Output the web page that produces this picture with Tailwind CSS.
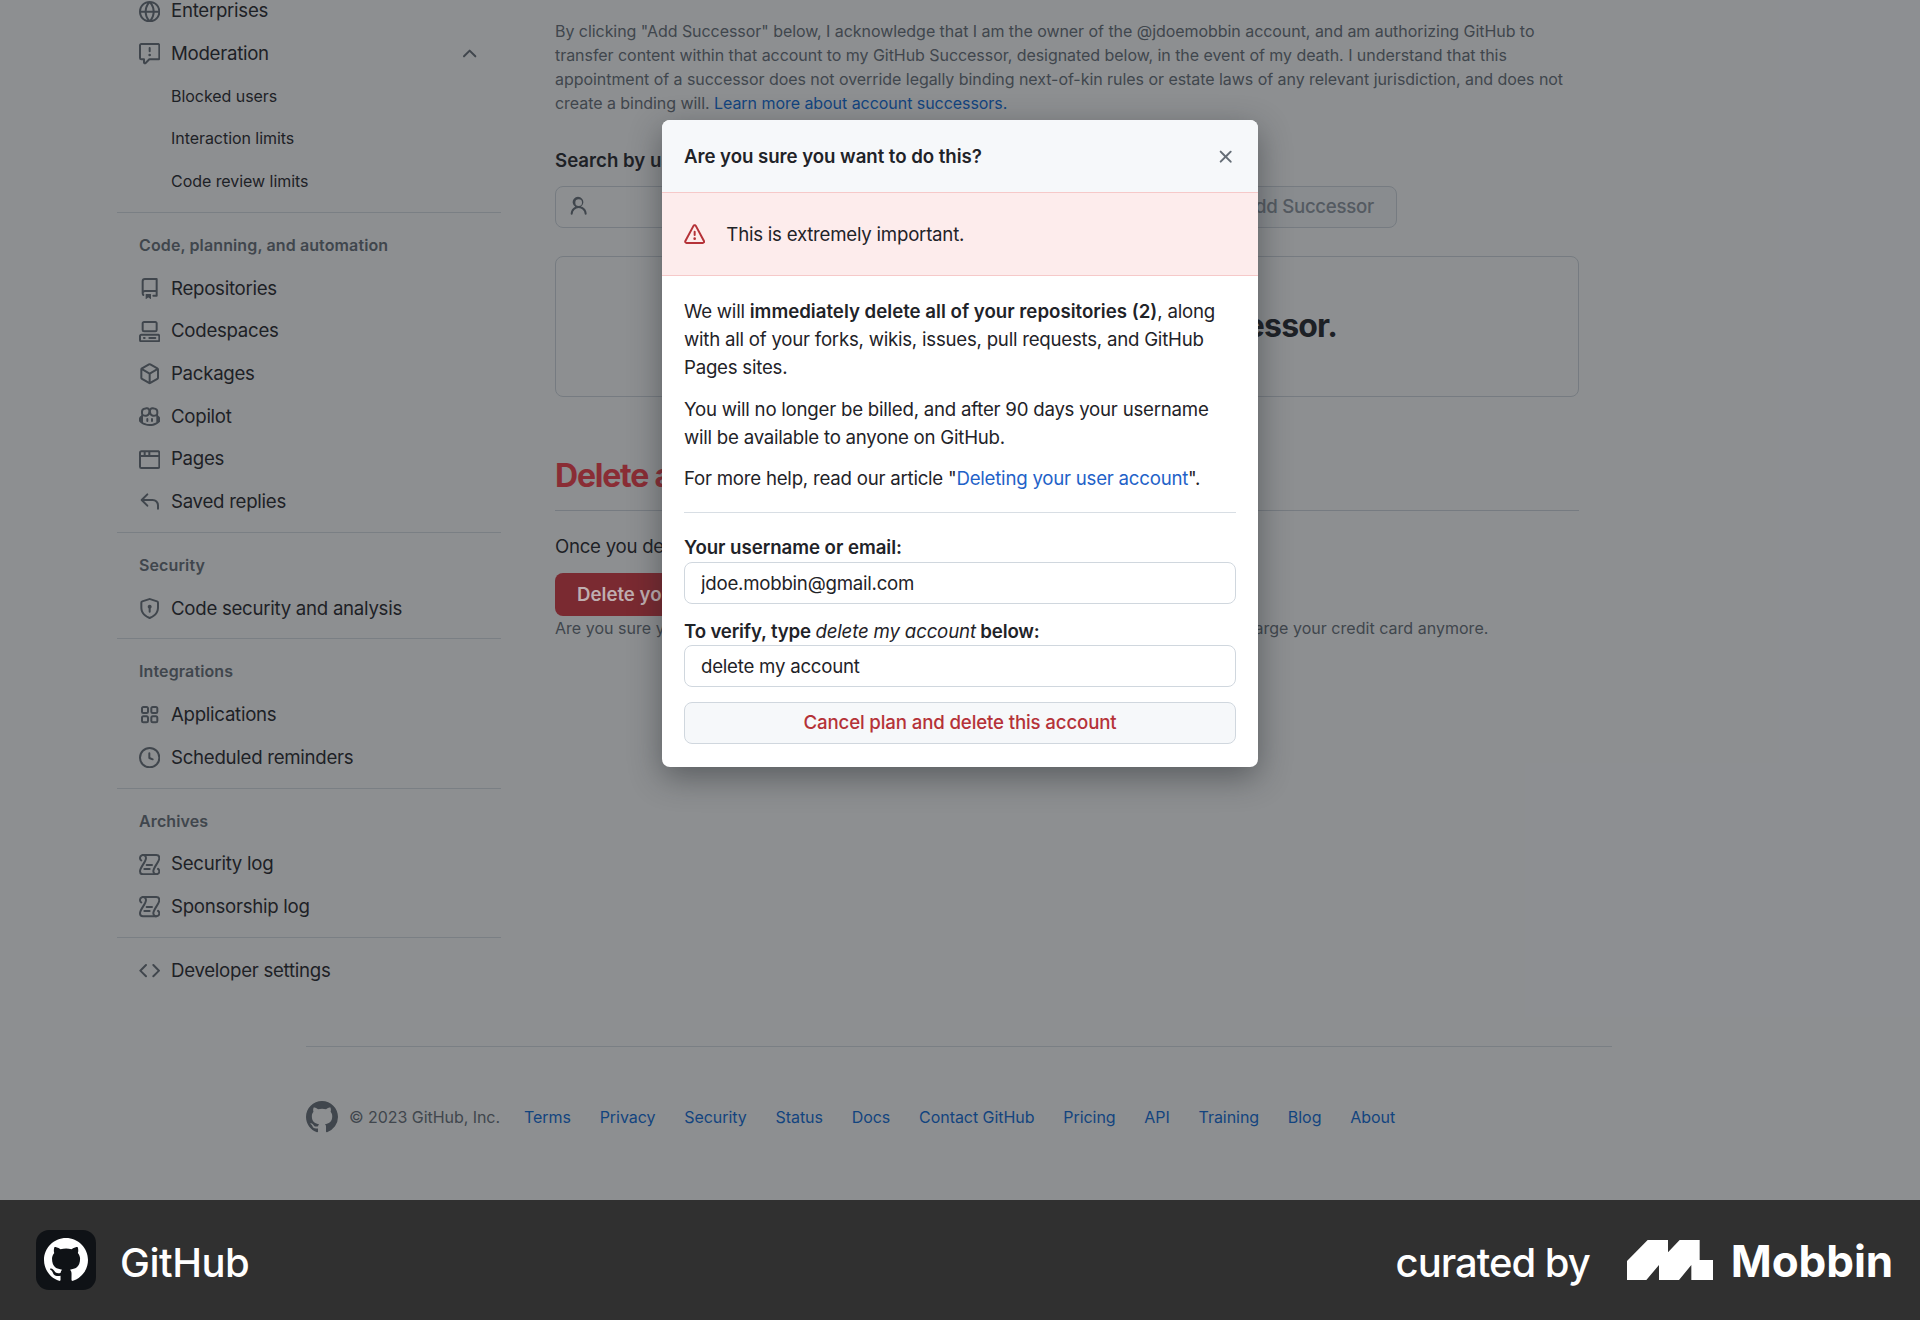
<!DOCTYPE html>
<html lang="en">
<head>
  <meta charset="UTF-8" />
  <title>Delete account</title>
  <script src="https://cdn.jsdelivr.net/npm/@tailwindcss/browser@4"></script>
</head>
<body class="bg-white font-[family-name:Inter,sans-serif] text-[#1f2328]">
  <div class="w-[1920px] h-[1320px] overflow-hidden flex flex-col">
    <div class="relative h-[1200px] overflow-hidden bg-white">
      <div class="flex h-[1046px] pl-[117px] gap-[54px]">
        <!-- sidebar -->
        <nav class="w-[384px] shrink-0 -mt-[10px] text-[18.67px] tracking-[-0.28px]">
          <div class="h-[42.67px] flex items-center pl-[22px] gap-[10.67px]">
            <svg class="w-[21.33px] h-[21.33px] fill-[#656d76]" viewBox="0 0 16 16"><path d="M8 0a8 8 0 1 1 0 16A8 8 0 0 1 8 0ZM5.78 8.75a9.64 9.64 0 0 0 1.363 4.177c.255.426.542.832.857 1.215.245-.296.551-.705.857-1.215A9.64 9.64 0 0 0 10.22 8.75Zm4.44-1.5a9.64 9.64 0 0 0-1.363-4.177c-.307-.51-.612-.919-.857-1.215a9.927 9.927 0 0 0-.857 1.215A9.64 9.64 0 0 0 5.78 7.25Zm-5.944 1.5H1.543a6.507 6.507 0 0 0 4.666 5.5c-.123-.181-.24-.365-.352-.552-.715-1.192-1.437-2.874-1.581-4.948Zm-2.733-1.5h2.733c.144-2.074.866-3.756 1.58-4.948.12-.197.237-.381.353-.552a6.507 6.507 0 0 0-4.666 5.5Zm10.181 1.5c-.144 2.074-.866 3.756-1.58 4.948-.12.197-.237.381-.353.552a6.507 6.507 0 0 0 4.666-5.5Zm2.733-1.5a6.507 6.507 0 0 0-4.666-5.5c.123.181.24.365.353.552.714 1.192 1.436 2.874 1.58 4.948Z"/></svg>
            <span>Enterprises</span>
          </div>
          <div class="h-[42.67px] flex items-center pl-[22px] gap-[10.67px]">
            <svg class="w-[21.33px] h-[21.33px] fill-[#656d76]" viewBox="0 0 16 16"><path d="M0 1.75C0 .784.784 0 1.75 0h12.5C15.216 0 16 .784 16 1.75v9.5A1.75 1.75 0 0 1 14.25 13H8.06l-2.573 2.573A1.458 1.458 0 0 1 3 14.543V13H1.75A1.75 1.75 0 0 1 0 11.25Zm1.75-.25a.25.25 0 0 0-.25.25v9.5c0 .138.112.25.25.25h2a.75.75 0 0 1 .75.75v2.19l2.72-2.72a.749.749 0 0 1 .53-.22h6.5a.25.25 0 0 0 .25-.25v-9.5a.25.25 0 0 0-.25-.25Zm7 2.25v2.5a.75.75 0 0 1-1.5 0v-2.5a.75.75 0 0 1 1.5 0ZM9 9a1 1 0 1 1-2 0 1 1 0 0 1 2 0Z"/></svg>
            <span>Moderation</span>
            <svg class="ml-auto mr-[21px] w-[21.33px] h-[21.33px] fill-[#656d76]" viewBox="0 0 16 16"><path d="M3.22 10.53a.749.749 0 0 1 0-1.06l4.25-4.25a.749.749 0 0 1 1.06 0l4.25 4.25a.749.749 0 0 1-1.06 1.06L8 6.811 4.28 10.53a.749.749 0 0 1-1.06 0Z"/></svg>
          </div>
          <div class="h-[42.67px] pb-[2px] flex items-center pl-[54px] text-[16px] tracking-[-0.05px]">Blocked users</div>
          <div class="h-[42.67px] pb-[2px] flex items-center pl-[54px] text-[16px] tracking-[-0.05px]">Interaction limits</div>
          <div class="h-[42.67px] pb-[2px] flex items-center pl-[54px] text-[16px] tracking-[-0.05px]">Code review limits</div>
          <div class="mt-[8.65px] border-t border-[#d8dee4]"></div>

          <div class="h-[54.33px] pt-[22px] pl-[22px] text-[16px] leading-[21.33px] font-semibold text-[#656d76] tracking-[0.12px]">Code, planning, and automation</div>
          <div class="h-[42.67px] flex items-center pl-[22px] gap-[10.67px]">
            <svg class="w-[21.33px] h-[21.33px] fill-[#656d76]" viewBox="0 0 16 16"><path d="M2 2.5A2.5 2.5 0 0 1 4.5 0h8.75a.75.75 0 0 1 .75.75v12.5a.75.75 0 0 1-.75.75h-2.5a.75.75 0 0 1 0-1.5h1.75v-2h-8a1 1 0 0 0-.714 1.7.75.75 0 1 1-1.072 1.05A2.495 2.495 0 0 1 2 11.5Zm10.5-1h-8a1 1 0 0 0-1 1v6.708A2.486 2.486 0 0 1 4.5 9h8ZM5 12.25a.25.25 0 0 1 .25-.25h3.5a.25.25 0 0 1 .25.25v3.25a.25.25 0 0 1-.4.2l-1.45-1.087a.249.249 0 0 0-.3 0L5.4 15.7a.25.25 0 0 1-.4-.2Z"/></svg>
            <span>Repositories</span>
          </div>
          <div class="h-[42.67px] flex items-center pl-[22px] gap-[10.67px]">
            <svg class="w-[21.33px] h-[21.33px] fill-[#656d76]" viewBox="0 0 16 16"><path d="M0 11.25c0-.966.784-1.75 1.75-1.75h12.5c.966 0 1.75.784 1.75 1.75v3A1.75 1.75 0 0 1 14.25 16H1.75A1.75 1.75 0 0 1 0 14.25Zm2-9.5C2 .784 2.784 0 3.75 0h8.5C13.216 0 14 .784 14 1.75v5a1.75 1.75 0 0 1-1.75 1.75h-8.5A1.75 1.75 0 0 1 2 6.75Zm1.75-.25a.25.25 0 0 0-.25.25v5c0 .138.112.25.25.25h8.5a.25.25 0 0 0 .25-.25v-5a.25.25 0 0 0-.25-.25Zm-2 9.5a.25.25 0 0 0-.25.25v3c0 .138.112.25.25.25h12.5a.25.25 0 0 0 .25-.25v-3a.25.25 0 0 0-.25-.25Z"/><path d="M7 12.75a.75.75 0 0 1 .75-.75h4.5a.75.75 0 0 1 0 1.5h-4.5a.75.75 0 0 1-.75-.75Zm-4 0c0-.414.336-.75.75-.75h.5a.75.75 0 0 1 0 1.5h-.5a.75.75 0 0 1-.75-.75Z"/></svg>
            <span>Codespaces</span>
          </div>
          <div class="h-[42.67px] flex items-center pl-[22px] gap-[10.67px]">
            <svg class="w-[21.33px] h-[21.33px] fill-[#656d76]" viewBox="0 0 16 16"><path d="m8.878.392 5.25 3.045c.54.314.872.89.872 1.514v6.098a1.75 1.75 0 0 1-.872 1.514l-5.25 3.045a1.75 1.75 0 0 1-1.756 0l-5.25-3.045A1.75 1.75 0 0 1 1 11.049V4.951c0-.624.332-1.201.872-1.514L7.122.392a1.75 1.75 0 0 1 1.756 0ZM7.875 1.69l-4.63 2.685L8 7.133l4.755-2.758-4.63-2.685a.248.248 0 0 0-.25 0ZM2.5 5.677v5.372c0 .09.047.171.125.216l4.625 2.683V8.432Zm6.25 8.271 4.625-2.683a.25.25 0 0 0 .125-.216V5.677L8.75 8.432Z"/></svg>
            <span>Packages</span>
          </div>
          <div class="h-[42.67px] flex items-center pl-[22px] gap-[10.67px]">
            <svg class="w-[21.33px] h-[21.33px] fill-[#656d76]" viewBox="0 0 16 16"><path d="M7.998 15.035c-4.562 0-7.873-2.914-7.998-3.749V9.338c.085-.628.677-1.686 1.588-2.065.013-.07.024-.143.036-.218.029-.183.06-.384.126-.612-.201-.508-.254-1.084-.254-1.656 0-.87.128-1.769.693-2.484.579-.733 1.494-1.124 2.724-1.261 1.206-.134 2.262.034 2.944.765.05.053.096.108.139.165.044-.057.094-.112.143-.165.682-.731 1.738-.899 2.944-.765 1.23.137 2.145.528 2.724 1.261.566.715.693 1.614.693 2.484 0 .572-.053 1.148-.254 1.656.066.228.098.429.126.612.012.076.024.148.037.218.924.385 1.522 1.471 1.591 2.095v1.872c0 .766-3.351 3.795-8.002 3.795Zm0-1.485c2.28 0 4.584-1.11 5.002-1.433V7.862l-.023-.116c-.49.21-1.075.291-1.727.291-1.146 0-2.059-.327-2.71-.991A3.222 3.222 0 0 1 8 6.303a3.24 3.24 0 0 1-.544.743c-.65.664-1.563.991-2.71.991-.652 0-1.236-.081-1.727-.291l-.023.116v4.255c.419.323 2.722 1.433 5.002 1.433ZM6.762 2.83c-.193-.206-.637-.413-1.682-.297-1.019.113-1.479.404-1.713.7-.247.312-.369.789-.369 1.554 0 .793.129 1.171.308 1.371.162.181.519.379 1.442.379.853 0 1.339-.235 1.638-.54.315-.322.527-.827.617-1.553.117-.935-.037-1.395-.241-1.614Zm4.155-.297c-1.044-.116-1.488.091-1.681.297-.204.219-.359.679-.242 1.614.091.726.303 1.231.618 1.553.299.305.784.54 1.638.54.922 0 1.28-.198 1.442-.379.179-.2.308-.578.308-1.371 0-.765-.123-1.242-.37-1.554-.233-.296-.693-.587-1.713-.7Z"/><path d="M6.25 9.037a.75.75 0 0 1 .75.75v1.501a.75.75 0 0 1-1.5 0V9.787a.75.75 0 0 1 .75-.75Zm4.25.75v1.501a.75.75 0 0 1-1.5 0V9.787a.75.75 0 0 1 1.5 0Z"/></svg>
            <span>Copilot</span>
          </div>
          <div class="h-[42.67px] flex items-center pl-[22px] gap-[10.67px]">
            <svg class="w-[21.33px] h-[21.33px] fill-[#656d76]" viewBox="0 0 16 16"><path d="M0 2.75C0 1.784.784 1 1.75 1h12.5c.966 0 1.75.784 1.75 1.75v10.5A1.75 1.75 0 0 1 14.25 15H1.75A1.75 1.75 0 0 1 0 13.25ZM14.5 6h-13v7.25c0 .138.112.25.25.25h12.5a.25.25 0 0 0 .25-.25Zm-6-3.5v2h6V2.75a.25.25 0 0 0-.25-.25ZM5 2.5v2h2v-2Zm-3.25 0a.25.25 0 0 0-.25.25V4.5h2v-2Z"/></svg>
            <span>Pages</span>
          </div>
          <div class="h-[42.67px] flex items-center pl-[22px] gap-[10.67px]">
            <svg class="w-[21.33px] h-[21.33px] fill-[#656d76]" viewBox="0 0 16 16"><path d="M6.78 1.97a.75.75 0 0 1 0 1.06L3.81 6h6.44A4.75 4.75 0 0 1 15 10.75v2.5a.75.75 0 0 1-1.5 0v-2.5a3.25 3.25 0 0 0-3.25-3.25H3.81l2.97 2.97a.749.749 0 0 1-.326 1.275.749.749 0 0 1-.734-.215L1.47 7.28a.75.75 0 0 1 0-1.06l4.25-4.25a.75.75 0 0 1 1.06 0Z"/></svg>
            <span>Saved replies</span>
          </div>
          <div class="mt-[8.67px] border-t border-[#d8dee4]"></div>

          <div class="h-[54.33px] pt-[22px] pl-[22px] text-[16px] leading-[21.33px] font-semibold text-[#656d76] tracking-[0.12px]">Security</div>
          <div class="h-[42.67px] flex items-center pl-[22px] gap-[10.67px]">
            <svg class="w-[21.33px] h-[21.33px] fill-[#656d76]" viewBox="0 0 16 16"><path d="m8.533.133 5.25 1.68A1.75 1.75 0 0 1 15 3.48V7c0 1.566-.32 3.182-1.303 4.682-.983 1.498-2.585 2.813-5.032 3.855a1.697 1.697 0 0 1-1.33 0c-2.447-1.042-4.049-2.357-5.032-3.855C1.32 10.182 1 8.566 1 7V3.48a1.75 1.75 0 0 1 1.217-1.667l5.25-1.68a1.748 1.748 0 0 1 1.066 0Zm-.61 1.429.001.001-5.25 1.68a.251.251 0 0 0-.174.237V7c0 1.36.275 2.666 1.057 3.859.784 1.194 2.121 2.342 4.366 3.298a.196.196 0 0 0 .154 0c2.245-.957 3.582-2.103 4.366-3.297C13.225 9.666 13.5 8.358 13.5 7V3.48a.25.25 0 0 0-.174-.238l-5.25-1.68a.25.25 0 0 0-.153 0ZM9.5 6.5c0 .536-.286 1.032-.75 1.3v2.45a.75.75 0 0 1-1.5 0V7.8A1.5 1.5 0 1 1 9.5 6.5Z"/></svg>
            <span>Code security and analysis</span>
          </div>
          <div class="mt-[8.67px] border-t border-[#d8dee4]"></div>

          <div class="h-[54.33px] pt-[22px] pl-[22px] text-[16px] leading-[21.33px] font-semibold text-[#656d76] tracking-[0.12px]">Integrations</div>
          <div class="h-[42.67px] flex items-center pl-[22px] gap-[10.67px]">
            <svg class="w-[21.33px] h-[21.33px] fill-[#656d76]" viewBox="0 0 16 16"><path d="M1.5 3.25c0-.966.784-1.75 1.75-1.75h2.5c.966 0 1.75.784 1.75 1.75v2.5A1.75 1.75 0 0 1 5.75 7.5h-2.5A1.75 1.75 0 0 1 1.5 5.75Zm7 0c0-.966.784-1.75 1.75-1.75h2.5c.966 0 1.75.784 1.75 1.75v2.5a1.75 1.75 0 0 1-1.75 1.75h-2.5A1.75 1.75 0 0 1 8.5 5.75Zm-7 7c0-.966.784-1.75 1.75-1.75h2.5c.966 0 1.75.784 1.75 1.75v2.5a1.75 1.75 0 0 1-1.75 1.75h-2.5a1.75 1.75 0 0 1-1.75-1.75Zm7 0c0-.966.784-1.75 1.75-1.75h2.5c.966 0 1.75.784 1.75 1.75v2.5a1.75 1.75 0 0 1-1.75 1.75h-2.5a1.75 1.75 0 0 1-1.75-1.75ZM3.25 3a.25.25 0 0 0-.25.25v2.5c0 .138.112.25.25.25h2.5A.25.25 0 0 0 6 5.75v-2.5A.25.25 0 0 0 5.75 3Zm7 0a.25.25 0 0 0-.25.25v2.5c0 .138.112.25.25.25h2.5a.25.25 0 0 0 .25-.25v-2.5a.25.25 0 0 0-.25-.25Zm-7 7a.25.25 0 0 0-.25.25v2.5c0 .138.112.25.25.25h2.5a.25.25 0 0 0 .25-.25v-2.5a.25.25 0 0 0-.25-.25Zm7 0a.25.25 0 0 0-.25.25v2.5c0 .138.112.25.25.25h2.5a.25.25 0 0 0 .25-.25v-2.5a.25.25 0 0 0-.25-.25Z"/></svg>
            <span>Applications</span>
          </div>
          <div class="h-[42.67px] flex items-center pl-[22px] gap-[10.67px]">
            <svg class="w-[21.33px] h-[21.33px] fill-[#656d76]" viewBox="0 0 16 16"><path d="M8 0a8 8 0 1 1 0 16A8 8 0 0 1 8 0ZM1.5 8a6.5 6.5 0 1 0 13 0 6.5 6.5 0 0 0-13 0Zm7-3.25v2.992l2.028.812a.75.75 0 0 1-.557 1.392l-2.5-1A.751.751 0 0 1 7 8.25v-3.5a.75.75 0 0 1 1.5 0Z"/></svg>
            <span>Scheduled reminders</span>
          </div>
          <div class="mt-[8.67px] border-t border-[#d8dee4]"></div>

          <div class="h-[54.33px] pt-[22px] pl-[22px] text-[16px] leading-[21.33px] font-semibold text-[#656d76] tracking-[0.12px]">Archives</div>
          <div class="h-[42.67px] flex items-center pl-[22px] gap-[10.67px]">
            <svg class="w-[21.33px] h-[21.33px] fill-none stroke-[#656d76] stroke-[1.5]" stroke-linecap="round" viewBox="0 0 16 16"><path d="M3 .75H13A2.25 2.25 0 0 1 15.25 3C15.25 6 10.75 10 10.75 13A2.25 2.25 0 1 0 14.3 11.16"/><path d="M13 15.25H3A2.25 2.25 0 0 1 .75 13C.75 10 5.25 6 5.25 3A2.25 2.25 0 1 0 1.7 4.84"/><path d="M5.75 8.25h4M4 11.25h4"/></svg>
            <span>Security log</span>
          </div>
          <div class="h-[42.67px] flex items-center pl-[22px] gap-[10.67px]">
            <svg class="w-[21.33px] h-[21.33px] fill-none stroke-[#656d76] stroke-[1.5]" stroke-linecap="round" viewBox="0 0 16 16"><path d="M3 .75H13A2.25 2.25 0 0 1 15.25 3C15.25 6 10.75 10 10.75 13A2.25 2.25 0 1 0 14.3 11.16"/><path d="M13 15.25H3A2.25 2.25 0 0 1 .75 13C.75 10 5.25 6 5.25 3A2.25 2.25 0 1 0 1.7 4.84"/><path d="M5.75 8.25h4M4 11.25h4"/></svg>
            <span>Sponsorship log</span>
          </div>
          <div class="mt-[9px] mb-[11px] border-t border-[#d8dee4]"></div>
          <div class="h-[42.67px] flex items-center pl-[22px] gap-[10.67px]">
            <svg class="w-[21.33px] h-[21.33px] fill-[#656d76]" viewBox="0 0 16 16"><path d="m11.28 3.22 4.25 4.25a.75.75 0 0 1 0 1.06l-4.25 4.25a.749.749 0 0 1-1.275-.326.749.749 0 0 1 .215-.734L13.94 8l-3.72-3.72a.749.749 0 0 1 .326-1.275.749.749 0 0 1 .734.215Zm-6.56 0a.751.751 0 0 1 1.042.018.751.751 0 0 1 .018 1.042L2.06 8l3.72 3.72a.749.749 0 0 1-.326 1.275.749.749 0 0 1-.734-.215L.47 8.53a.75.75 0 0 1 0-1.06Z"/></svg>
            <span>Developer settings</span>
          </div>
        </nav>

        <!-- content -->
        <main class="w-[1024px] pt-[19px]">
          <p class="text-[16px] leading-[24px] text-[#656d76] tracking-[-0.05px]">By clicking "Add Successor" below, I acknowledge that I am the owner of the @jdoemobbin account, and am authorizing GitHub to transfer content within that account to my GitHub Successor, designated below, in the event of my death. I understand that this appointment of a successor does not override legally binding next-of-kin rules or estate laws of any relevant jurisdiction, and does not create a binding will. <a class="text-[#0969da]">Learn more about account successors.</a></p>
          <div class="mt-[32px] h-[28px] text-[18.67px] leading-[28px] font-semibold">Search by username, full name, or email address</div>
          <div class="mt-[10.5px] flex gap-[10px]">
            <div class="w-[680px] h-[42.67px] border border-[#d0d7de] rounded-[8px] flex items-center pl-[12px]">
              <svg class="w-[21.33px] h-[21.33px] fill-[#656d76]" viewBox="0 0 16 16"><path d="M10.561 8.073a6.005 6.005 0 0 1 3.432 5.142.75.75 0 1 1-1.498.07 4.5 4.5 0 0 0-8.99 0 .75.75 0 0 1-1.498-.07 6.004 6.004 0 0 1 3.431-5.142 3.999 3.999 0 1 1 4.123 0ZM10.5 5a2.5 2.5 0 1 0-5 0 2.5 2.5 0 0 0 5 0Z"/></svg>
            </div>
            <div class="w-[152px] h-[42.67px] border border-[#d0d7de] rounded-[8px] bg-[#f6f8fa] flex items-center justify-end pr-[22px] text-[18.67px] font-medium tracking-[-0.28px] text-[#8c959f] whitespace-nowrap">Add Successor</div>
          </div>
          <div class="mt-[27.5px] h-[141px] pl-[15px] border border-[#d0d7de] rounded-[8px] flex items-center justify-center text-[32px] font-bold tracking-[-0.8px]">You have no designated successor.</div>
          <h2 class="relative z-10 mt-[59px] h-[40px] text-[32px] leading-[40px] font-bold tracking-[-1.2px] text-[#8a2d35]">Delete account</h2>
          <div class="mt-[14px] border-t border-[#d0d7de]"></div>
          <p class="mt-[22px] h-[28px] text-[18.67px] leading-[28px] tracking-[-0.28px]">Once you delete your account, there is no going back. Please be certain.</p>
          <div class="relative z-10 mt-[12px] w-[240px] h-[43px] pt-[1px] rounded-[8px] bg-[#7a2a31] text-[#bfaeb0] font-semibold text-[18.67px] flex items-center pl-[22px]">Delete your account</div>
          <p class="h-[24px] text-[16px] leading-[24px] text-[#656d76] tracking-[0.03px]">Are you sure you don't want to just downgrade your account to a free account? We won't charge your credit card anymore.</p>
        </main>
      </div>

      <!-- footer -->
      <footer class="ml-[306px] w-[1306px] border-t border-[#d8dee4] pt-[54px] flex items-center text-[16px] tracking-[-0.05px]">
        <svg class="w-[32px] h-[32px] fill-[#656d76]" viewBox="0 0 16 16"><path d="M8 0C3.58 0 0 3.58 0 8c0 3.54 2.29 6.53 5.47 7.59.4.07.55-.17.55-.38 0-.19-.01-.82-.01-1.49-2.01.37-2.53-.49-2.69-.94-.09-.23-.48-.94-.82-1.13-.28-.15-.68-.52-.01-.53.63-.01 1.08.58 1.23.82.72 1.21 1.87.87 2.33.66.07-.52.28-.87.51-1.07-1.78-.2-3.64-.89-3.64-3.95 0-.87.31-1.59.82-2.15-.08-.2-.36-1.02.08-2.12 0 0 .67-.21 2.2.82.64-.18 1.32-.27 2-.27.68 0 1.36.09 2 .27 1.53-1.04 2.2-.82 2.2-.82.44 1.1.16 1.92.08 2.12.51.56.82 1.27.82 2.15 0 3.07-1.87 3.75-3.65 3.95.29.25.54.73.54 1.48 0 1.07-.01 1.93-.01 2.2 0 .21.15.46.55.38A8.013 8.013 0 0016 8c0-4.42-3.58-8-8-8z"/></svg>
        <span class="ml-[11px] text-[#656d76]">© 2023 GitHub, Inc.</span>
        <div class="ml-[24px] flex gap-[28.8px] text-[#0969da]">
          <a>Terms</a><a>Privacy</a><a>Security</a><a>Status</a><a>Docs</a><a>Contact GitHub</a><a>Pricing</a><a>API</a><a>Training</a><a>Blog</a><a>About</a>
        </div>
      </footer>

      <!-- dimmed backdrop -->
      <div class="absolute inset-0 bg-[#1b1f24]/50"></div>

      <!-- dialog -->
      <div class="absolute z-20 left-[662px] top-[120px] w-[596px] h-[647px] bg-white rounded-[8px] overflow-hidden shadow-[0_10px_32px_rgba(27,31,36,0.45)] text-[18.67px] leading-[28px] tracking-[-0.24px]">
        <div class="h-[72px] pt-[2px] bg-[#f6f8fa] flex items-center justify-between pl-[22px] pr-[22px] font-semibold tracking-[-0.05px]">
          <span>Are you sure you want to do this?</span>
          <svg class="w-[21.33px] h-[21.33px] fill-[#656d76]" viewBox="0 0 16 16"><path d="M3.72 3.72a.75.75 0 0 1 1.06 0L8 6.94l3.22-3.22a.749.749 0 0 1 1.275.326.749.749 0 0 1-.215.734L9.06 8l3.22 3.22a.749.749 0 0 1-.326 1.275.749.749 0 0 1-.734-.215L8 9.06l-3.22 3.22a.751.751 0 0 1-1.042-.018.751.751 0 0 1-.018-1.042L6.94 8 3.72 4.78a.75.75 0 0 1 0-1.06Z"/></svg>
        </div>
        <div class="h-[84px] pt-[2px] bg-[#fdecec] border-y border-[#f6c9c9] flex items-center pl-[22px] gap-[21px]">
          <svg class="w-[21.33px] h-[21.33px] fill-[#b53238]" viewBox="0 0 16 16"><path d="M6.457 1.047c.659-1.234 2.427-1.234 3.086 0l6.082 11.378A1.75 1.75 0 0 1 14.082 15H1.918a1.75 1.75 0 0 1-1.543-2.575Zm1.763.707a.25.25 0 0 0-.44 0L1.698 13.132a.25.25 0 0 0 .22.368h12.164a.25.25 0 0 0 .22-.368Zm.53 3.996v2.5a.75.75 0 0 1-1.5 0v-2.5a.75.75 0 0 1 1.5 0ZM9 11a1 1 0 1 1-2 0 1 1 0 0 1 2 0Z"/></svg>
          <span>This is extremely important.</span>
        </div>
        <div class="px-[22px] pt-[22px]">
          <p>We will <strong class="font-semibold tracking-normal">immediately delete all of your repositories (2)</strong>, along with all of your forks, wikis, issues, pull requests, and GitHub Pages sites.</p>
          <p class="mt-[14px]">You will no longer be billed, and after 90 days your username will be available to anyone on GitHub.</p>
          <p class="mt-[13px]">For more help, read our article "<a class="text-[#1f62c8]">Deleting your user account</a>".</p>
          <div class="mt-[19px] border-t border-[#d8dee4]"></div>
          <label class="block mt-[21px] font-semibold tracking-[-0.05px]">Your username or email:</label>
          <input class="block w-full h-[42px] border border-[#d0d7de] rounded-[8px] px-[16px]" value="jdoe.mobbin@gmail.com" readonly />
          <label class="block mt-[14px] h-[27px] font-semibold tracking-[-0.17px]">To verify, type <em class="font-normal italic">delete my account</em> below:</label>
          <input class="block w-full h-[42px] border border-[#d0d7de] rounded-[8px] px-[16px]" value="delete my account" readonly />
          <button class="block mt-[15px] w-full h-[42px] border border-[#d0d7de] rounded-[8px] bg-[#f6f8fa] font-medium text-[#b53238] tracking-[-0.14px]">Cancel plan and delete this account</button>
        </div>
      </div>
    </div>

    <!-- mobbin bar -->
    <div class="h-[120px] bg-[#303030] flex items-center justify-between pl-[36px] pr-[27px] text-white">
      <div class="flex items-center">
        <div class="w-[60px] h-[60px] rounded-[13px] bg-[#0f1216] flex items-center justify-center">
          <svg class="w-[44px] h-[44px] fill-white" viewBox="0 0 16 16"><path d="M8 0C3.58 0 0 3.58 0 8c0 3.54 2.29 6.53 5.47 7.59.4.07.55-.17.55-.38 0-.19-.01-.82-.01-1.49-2.01.37-2.53-.49-2.69-.94-.09-.23-.48-.94-.82-1.13-.28-.15-.68-.52-.01-.53.63-.01 1.08.58 1.23.82.72 1.21 1.87.87 2.33.66.07-.52.28-.87.51-1.07-1.78-.2-3.64-.89-3.64-3.95 0-.87.31-1.59.82-2.15-.08-.2-.36-1.02.08-2.12 0 0 .67-.21 2.2.82.64-.18 1.32-.27 2-.27.68 0 1.36.09 2 .27 1.53-1.04 2.2-.82 2.2-.82.44 1.1.16 1.92.08 2.12.51.56.82 1.27.82 2.15 0 3.07-1.87 3.75-3.65 3.95.29.25.54.73.54 1.48 0 1.07-.01 1.93-.01 2.2 0 .21.15.46.55.38A8.013 8.013 0 0016 8c0-4.42-3.58-8-8-8z"/></svg>
        </div>
        <span class="ml-[24px] pt-[5px] text-[40px] font-medium tracking-[-0.5px]">GitHub</span>
      </div>
      <div class="flex items-center">
        <span class="pt-[5px] text-[40px] font-medium tracking-[-1px]">curated by</span>
        <svg class="ml-[37px] w-[86px] h-[40px] fill-white" viewBox="22 25 258 120"><path d="M22 145V88L84 25H145V62L180 25H240V85H280V145H215V100L178 145H118V100L80 145Z"/></svg>
        <span class="ml-[18px] pt-[2px] text-[44px] font-bold tracking-[-0.1px]">Mobbin</span>
      </div>
    </div>
  </div>
</body>
</html>
